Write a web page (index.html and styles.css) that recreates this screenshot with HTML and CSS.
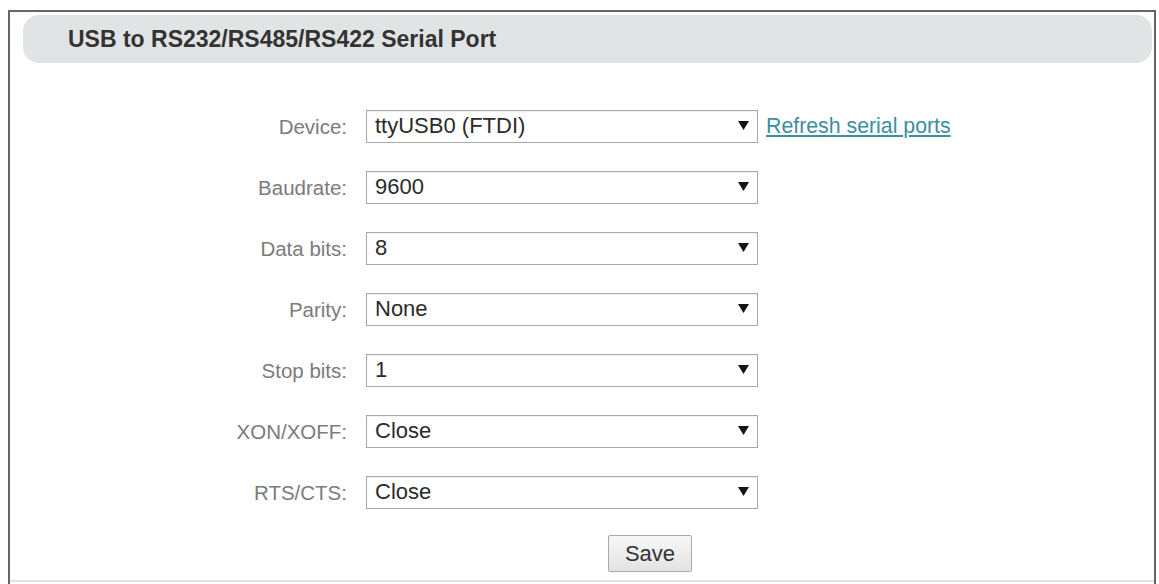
FILE: index.html
```html
<!DOCTYPE html>
<html lang="en">
<head>
<meta charset="utf-8">
<title>USB to RS232/RS485/RS422 Serial Port</title>
<link rel="stylesheet" href="styles.css">
</head>
<body>
<div class="panel">
  <div class="panel-head">USB to RS232/RS485/RS422 Serial Port</div>
  <form class="form">
    <label class="lbl" for="dev">Device:</label>
    <div class="sel"><select id="dev"><option>ttyUSB0 (FTDI)</option></select><svg class="arrow" viewBox="0 0 11 9"><path d="M0 0H11L5.5 9Z"/></svg></div>
    <a class="link" href="#">Refresh serial ports</a>

    <label class="lbl" for="baud">Baudrate:</label>
    <div class="sel"><select id="baud"><option>9600</option></select><svg class="arrow" viewBox="0 0 11 9"><path d="M0 0H11L5.5 9Z"/></svg></div>
    <span></span>

    <label class="lbl" for="data">Data bits:</label>
    <div class="sel"><select id="data"><option>8</option></select><svg class="arrow" viewBox="0 0 11 9"><path d="M0 0H11L5.5 9Z"/></svg></div>
    <span></span>

    <label class="lbl" for="par">Parity:</label>
    <div class="sel"><select id="par"><option>None</option></select><svg class="arrow" viewBox="0 0 11 9"><path d="M0 0H11L5.5 9Z"/></svg></div>
    <span></span>

    <label class="lbl" for="stop">Stop bits:</label>
    <div class="sel"><select id="stop"><option>1</option></select><svg class="arrow" viewBox="0 0 11 9"><path d="M0 0H11L5.5 9Z"/></svg></div>
    <span></span>

    <label class="lbl" for="xon">XON/XOFF:</label>
    <div class="sel"><select id="xon"><option>Close</option></select><svg class="arrow" viewBox="0 0 11 9"><path d="M0 0H11L5.5 9Z"/></svg></div>
    <span></span>

    <label class="lbl" for="rts">RTS/CTS:</label>
    <div class="sel"><select id="rts"><option>Close</option></select><svg class="arrow" viewBox="0 0 11 9"><path d="M0 0H11L5.5 9Z"/></svg></div>
    <span></span>

    <div class="actions"><button type="button" class="btn">Save</button></div>
  </form>
  <div class="divider"></div>
</div>
</body>
</html>
```

FILE: styles.css
```css
html, body {
  background: #ffffff;
}
body {
  margin: 10px 3px 0 8px;
  font-family: "Liberation Sans", Arial, sans-serif;
  overflow: hidden;
}
.panel {
  box-sizing: border-box;
  height: 574px;
  border: 2px solid #666666;
  border-bottom: none;
  display: flex;
  flex-direction: column;
}
.panel-head {
  margin: 3px 2px 0 13px;
  height: 48px;
  border-radius: 16px;
  background: #e1e4e5;
  padding-left: 45px;
  display: flex;
  align-items: center;
  font-size: 23px;
  font-weight: bold;
  color: #333333;
}
.form {
  margin: 47px 0 0 0;
  display: grid;
  grid-template-columns: 356px 392px auto;
  grid-auto-rows: 33px;
  row-gap: 28px;
  align-items: center;
}
.lbl {
  grid-column: 1;
  text-align: right;
  font-size: 20.5px;
  color: #7b7b7b;
  margin-right: 19px;
}
.sel {
  position: relative;
  height: 33px;
}
.sel select {
  appearance: none;
  -webkit-appearance: none;
  box-sizing: border-box;
  width: 100%;
  height: 33px;
  margin: 0;
  border: 1px solid #a8a8a8;
  border-radius: 0;
  background: #ffffff;
  padding: 0 0 2px 8px;
  font-family: "Liberation Sans", Arial, sans-serif;
  font-size: 22px;
  color: #2b2b2b;
  box-shadow: inset 0 1px 1px rgba(0,0,0,0.06);
}
.arrow {
  position: absolute;
  right: 9px;
  top: 11px;
  width: 11px;
  height: 9px;
  fill: #151515;
  pointer-events: none;
}
.link {
  margin-left: 8px;
  font-size: 21.3px;
  color: #3d8ea3;
  text-decoration: underline;
  white-space: nowrap;
}
.actions {
  grid-column: 2 / span 2;
  height: 37px;
  margin-top: -2px;
  align-self: start;
}
.btn {
  margin-left: 242px;
  width: 84px;
  height: 37px;
  box-sizing: border-box;
  border: 1px solid #a9a9a9;
  border-radius: 2px;
  background: linear-gradient(#f7f7f7, #e3e3e3);
  font-family: "Liberation Sans", Arial, sans-serif;
  font-size: 22px;
  color: #333333;
  padding: 0;
}
.divider {
  margin-top: auto;
  margin-bottom: 2px;
  height: 2px;
  background: #e4e4e4;
}
```
